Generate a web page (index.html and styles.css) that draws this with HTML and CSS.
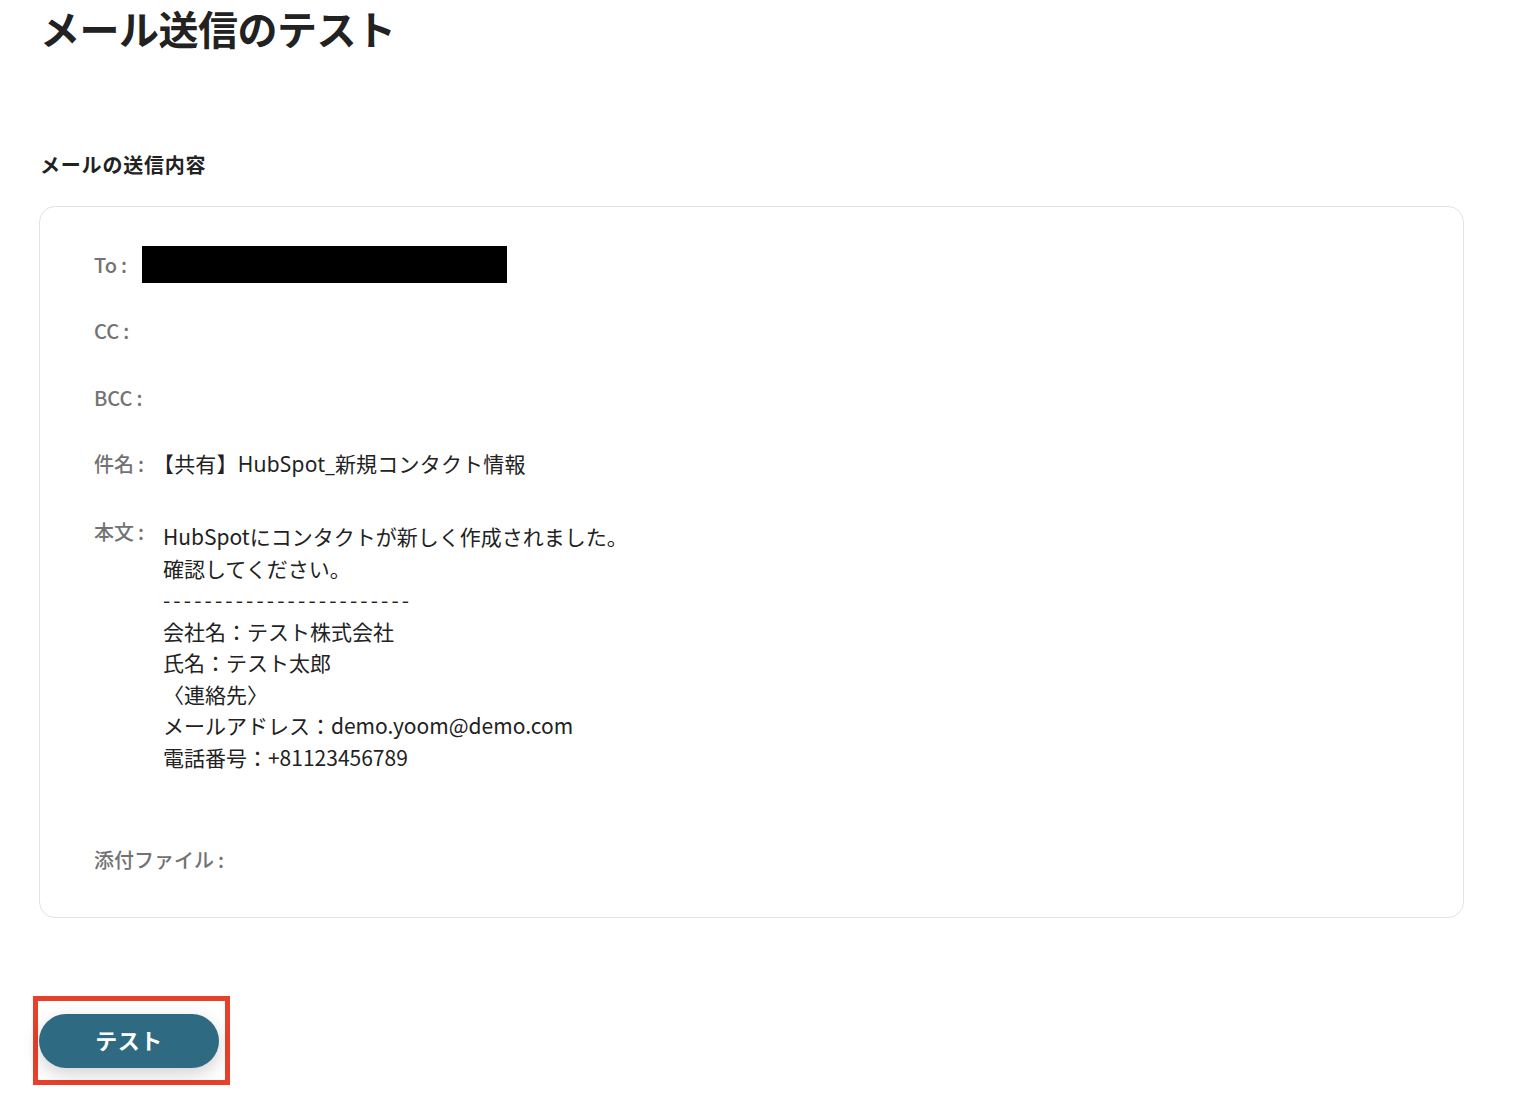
FILE: index.html
```html
<!DOCTYPE html>
<html lang="ja">
<head>
    <meta charset="UTF-8">
    <meta name="viewport" content="width=device-width, initial-scale=1.0">
    <title>メール送信のテスト</title>
    <link rel="stylesheet" href="styles.css">
</head>
<body>
    <div class="page">
        <h1 class="page-title">メール送信のテスト</h1>

        <h2 class="section-title">メールの送信内容</h2>

        <div class="mail-card">
            <div class="mail-row">
                <span class="mail-label">To<span class="colon">:</span></span>
                <span class="redacted"></span>
            </div>
            <div class="mail-row">
                <span class="mail-label">CC<span class="colon">:</span></span>
            </div>
            <div class="mail-row">
                <span class="mail-label">BCC<span class="colon">:</span></span>
            </div>
            <div class="mail-row">
                <span class="mail-label">件名<span class="colon">:</span></span>
                <span class="mail-value subject">【共有】HubSpot_新規コンタクト情報</span>
            </div>
            <div class="mail-row body-row">
                <span class="mail-label">本文<span class="colon">:</span></span>
                <div class="mail-body">
                    <p>HubSpotにコンタクトが新しく作成されました。</p>
                    <p>確認してください。</p>
                    <p class="divider">------------------------</p>
                    <p>会社名：テスト株式会社</p>
                    <p>氏名：テスト太郎</p>
                    <p>〈連絡先〉</p>
                    <p>メールアドレス：demo.yoom@demo.com</p>
                    <p>電話番号：+81123456789</p>
                </div>
            </div>
            <div class="mail-row">
                <span class="mail-label">添付ファイル<span class="colon">:</span></span>
            </div>
        </div>

        <div class="highlight">
            <button class="test-button">テスト</button>
        </div>
    </div>
</body>
</html>
```

FILE: styles.css
```css
* {
    margin: 0;
    padding: 0;
    box-sizing: border-box;
    font-family: 'Noto Sans CJK JP', 'Noto Sans', sans-serif;
}

body {
    background-color: #ffffff;
    color: #222;
}

.page {
    padding: 0 62px 0 39px;
}

.page-title {
    font-size: 40px;
    line-height: 56px;
    font-weight: 700;
    color: #222;
    letter-spacing: -0.5px;
    padding-left: 1px;
}

.section-title {
    margin-top: 94px;
    font-size: 20px;
    line-height: 30px;
    font-weight: 700;
    color: #222;
    letter-spacing: 0.8px;
    padding-left: 1px;
}

.mail-card {
    margin-top: 26px;
    border: 1px solid #e3e3e3;
    border-radius: 16px;
    padding: 39px 54px 38px;
    display: flex;
    flex-direction: column;
    gap: 29.5px;
}

.mail-row {
    display: flex;
    align-items: center;
    min-height: 37px;
}

.mail-label {
    font-size: 20px;
    line-height: 32px;
    font-weight: 500;
    color: #737373;
}

.colon {
    margin-left: 4px;
}

.redacted {
    display: block;
    width: 365px;
    height: 37px;
    margin-left: 15px;
    background-color: #000;
}

.mail-value {
    font-family: 'Noto Sans', 'Noto Sans CJK JP', sans-serif;
    font-size: 21px;
    line-height: 32px;
    color: #222;
    letter-spacing: 0.2px;
}

.subject {
    margin-left: 9px;
}

.body-row {
    align-items: flex-start;
}

.body-row .mail-label {
    margin-top: 4px;
}

.mail-body {
    margin: 9px 0 39px 19px;
    font-family: 'Noto Sans', 'Noto Sans CJK JP', sans-serif;
    font-size: 21px;
    line-height: 31.5px;
    color: #222;
    letter-spacing: 0;
}

.divider {
    letter-spacing: 3.1px;
}

.highlight {
    display: inline-block;
    margin: 78px 0 0 -6px;
    border: 5px solid #e8412b;
    padding: 13px 6px 12px 1px;
}

.test-button {
    display: block;
    width: 180px;
    height: 54px;
    border: none;
    border-radius: 27px;
    background-color: #2e6a82;
    color: #fff;
    font-size: 22px;
    line-height: 50px;
    padding-bottom: 4px;
    font-weight: 700;
    letter-spacing: 0.5px;
    box-shadow: 0 6px 18px rgba(0, 0, 0, 0.18);
    cursor: pointer;
}
```
